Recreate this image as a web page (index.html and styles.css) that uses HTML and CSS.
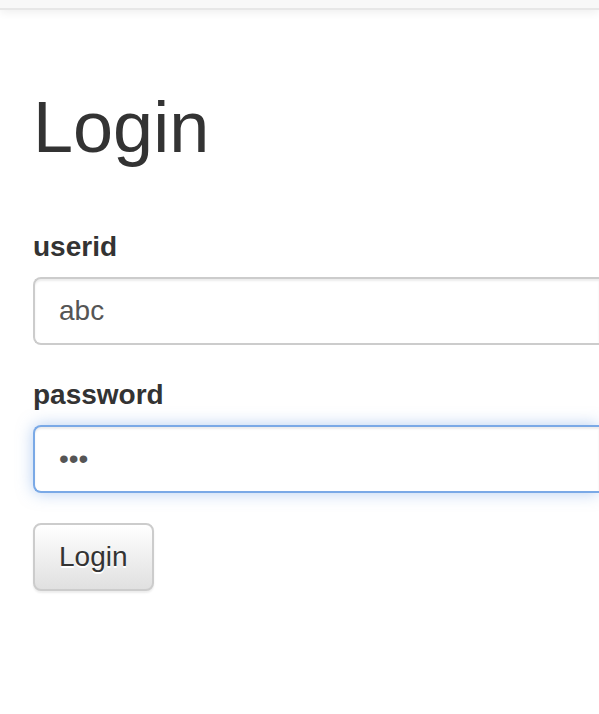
FILE: index.html
```html
<!DOCTYPE html>
<html>
<head>
<meta charset="utf-8">
<link rel="stylesheet" href="styles.css">
</head>
<body>
<div class="navbar"></div>
<main class="container">
  <h1 class="title">Login</h1>
  <form class="login-form">
    <div class="form-group">
      <label class="label" for="userid">userid</label>
      <input class="form-control" id="userid" type="text" value="abc">
    </div>
    <div class="form-group">
      <label class="label" for="password">password</label>
      <input class="form-control is-focused" id="password" type="password" value="abc">
    </div>
    <button class="btn" type="button">Login</button>
  </form>
</main>
</body>
</html>
```

FILE: styles.css
```css
html, body {
  margin: 0;
  padding: 0;
  overflow: hidden;
  background: #fff;
}
body {
  font-family: "Liberation Sans", Arial, sans-serif;
  font-size: 28px;
  line-height: 1.42857;
  color: #333;
  width: 599px;
  height: 714px;
}
.navbar {
  height: 8px;
  background: #f8f8f8;
  border-bottom: 2px solid #e7e7e7;
  box-shadow: 0 2px 10px rgba(0, 0, 0, 0.075);
}
.container {
  padding: 0 0 0 33px;
}
.title {
  margin: 78px 0 0 0;
  font-size: 72px;
  font-weight: 500;
  line-height: 1.1;
  color: #333;
}
.login-form {
  margin-top: 60px;
}
.form-group {
  margin-bottom: 30px;
}
.label {
  display: block;
  font-weight: bold;
  margin-bottom: 10px;
  line-height: 40px;
}
.form-control {
  display: block;
  box-sizing: border-box;
  width: 100%;
  height: 68px;
  padding: 12px 24px;
  font-family: "Liberation Sans", Arial, sans-serif;
  font-size: 28px;
  line-height: 1.42857;
  color: #555;
  background: #fff;
  border: 2px solid #ccc;
  border-right: 0;
  border-radius: 8px 0 0 8px;
  box-shadow: inset 0 2px 2px rgba(0, 0, 0, 0.075);
  outline: none;
  margin: 0;
}
.form-control.is-focused {
  border-color: #7aa9e6;
  box-shadow: inset 0 2px 2px rgba(0, 0, 0, 0.075), 0 0 16px rgba(110, 160, 230, 0.5);
}
.btn {
  display: inline-block;
  box-sizing: border-box;
  height: 68px;
  padding: 12px 24px;
  margin: 0;
  font-family: "Liberation Sans", Arial, sans-serif;
  font-size: 28px;
  line-height: 1.42857;
  color: #333;
  background-image: linear-gradient(to bottom, #fff 0, #e0e0e0 100%);
  border: 2px solid #ccc;
  border-radius: 8px;
  text-shadow: 0 2px 0 #fff;
  box-shadow: inset 0 2px 0 rgba(255, 255, 255, 0.15), 0 2px 2px rgba(0, 0, 0, 0.075);
}
```
